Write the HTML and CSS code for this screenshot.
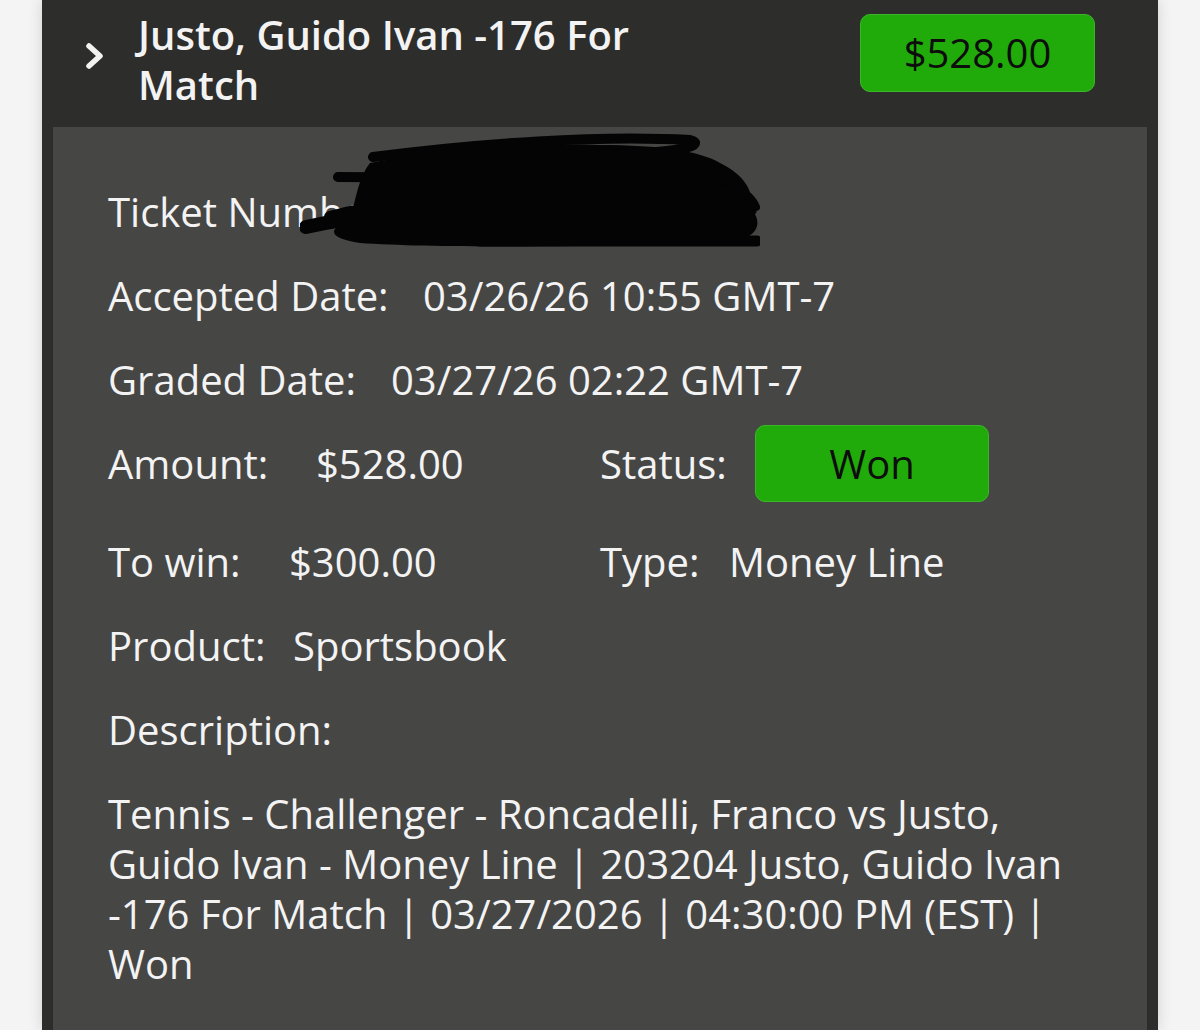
FILE: index.html
```html
<!DOCTYPE html>
<html lang="en">
<head>
<meta charset="utf-8">
<title>Bet ticket</title>
<link rel="stylesheet" href="styles.css">
</head>
<body>
<div class="panel">
  <div class="head">
    <svg class="chev" viewBox="0 0 20 28" width="20" height="28" aria-hidden="true">
      <path d="M4 4 L15 14 L4 24" fill="none" stroke="#f2f2f2" stroke-width="5.5" stroke-linecap="round" stroke-linejoin="round"/>
    </svg>
    <div class="title">Justo, Guido Ivan -176 For Match</div>
    <div class="badge badge-head">$528.00</div>
  </div>
  <div class="body">
    <div class="row row-ticket">
      <span class="k">Ticket Number:</span>
      <svg class="scribble" viewBox="0 0 460 118" width="460" height="118" aria-hidden="true">
        <path d="M70 30 C150 14 230 10 300 12 C360 12 400 18 420 30 C445 42 455 60 450 75 C462 86 460 102 440 106 C350 114 150 116 60 110 C30 106 25 96 50 88 C55 70 58 45 70 30 Z" fill="#040404"/>
        <g fill="none" stroke="#040404" stroke-linecap="round" stroke-linejoin="round">
          <path d="M73 24 C180 10 300 2 390 7 C402 10 400 19 300 22" stroke-width="10"/>
          <path d="M38 44 L420 47" stroke-width="10"/>
          <path d="M6 94 C50 84 100 78 170 78" stroke-width="14"/>
          <path d="M30 84 C80 70 140 66 200 66" stroke-width="12"/>
          <path d="M420 58 C440 60 456 70 452 78" stroke-width="9"/>
          <path d="M180 108 L457 108" stroke-width="11"/>
          <path d="M380 36 C420 42 450 58 456 74" stroke-width="8"/>
          <path d="M60 100 L120 104" stroke-width="10"/>
        </g>
      </svg>
    </div>
    <div class="row">
      <span class="k k-accepted">Accepted Date:</span><span class="v">03/26/26 10:55 GMT-7</span>
    </div>
    <div class="row">
      <span class="k k-graded">Graded Date:</span><span class="v">03/27/26 02:22 GMT-7</span>
    </div>
    <div class="row pair row-tall">
      <div class="cell"><span class="k k-amount">Amount:</span><span class="v">$528.00</span></div>
      <div class="cell"><span class="k k-status">Status:</span><span class="badge badge-status">Won</span></div>
    </div>
    <div class="row pair">
      <div class="cell"><span class="k k-towin">To win:</span><span class="v">$300.00</span></div>
      <div class="cell"><span class="k k-type">Type:</span><span class="v">Money Line</span></div>
    </div>
    <div class="row">
      <span class="k k-product">Product:</span><span class="v">Sportsbook</span>
    </div>
    <div class="row">
      <span class="k">Description:</span>
    </div>
    <p class="desc">Tennis - Challenger - Roncadelli, Franco vs Justo, Guido Ivan - Money Line | 203204 Justo, Guido Ivan -176 For Match | 03/27/2026 | 04:30:00 PM (EST) | Won</p>
  </div>
</div>
</body>
</html>
```
FILE: styles.css
```css
html, body {
  margin: 0;
  padding: 0;
}
body {
  background: #f4f4f4;
  font-family: "Open Sans", "DejaVu Sans", sans-serif;
  color: #f3f3f3;
  height: 1030px;
  overflow: hidden;
}
.panel {
  margin: 0 42px;
  background: #2d2d2c;
  height: 1030px;
  box-shadow: 0 0 14px rgba(0, 0, 0, 0.14);
  display: flex;
  flex-direction: column;
}
.head {
  display: flex;
  align-items: flex-start;
  height: 127px;
  box-sizing: border-box;
  padding: 10px 63px 0 43px;
}
.chev {
  flex: none;
  margin-top: 32px;
  margin-right: 33px;
}
.title {
  flex: 1;
  font-size: 40px;
  line-height: 50px;
  font-weight: 600;
  max-width: 560px;
}
.badge {
  display: inline-block;
  background: #21ab0b;
  border: 1px solid #3cb52a;
  box-sizing: border-box;
  border-radius: 10px;
  color: #0d0d0d;
  text-align: center;
}
.badge-head {
  margin-left: auto;
  margin-top: 4px;
  width: 235px;
  height: 78px;
  line-height: 76px;
  font-size: 40px;
}
.body {
  flex: 1;
  margin: 0 11px;
  background: #464645;
  padding: 60px 55px 0;
}
.row {
  display: flex;
  align-items: flex-start;
  font-size: 40px;
  line-height: 50px;
  margin-bottom: 34px;
  white-space: nowrap;
}
.row-ticket {
  position: relative;
}
.scribble {
  position: absolute;
  left: 192px;
  top: -54px;
}
.pair {
  display: grid;
  grid-template-columns: 492px 1fr;
}
.row-tall {
  min-height: 64px;
}
.cell {
  display: flex;
  align-items: flex-start;
}
.k {
  flex: none;
}
.k-accepted { width: 315px; }
.k-graded { width: 283px; }
.k-amount { width: 208px; }
.k-towin { width: 181px; }
.k-product { width: 185px; }
.k-status { width: 155px; }
.k-type { width: 129px; }
.badge-status {
  width: 234px;
  height: 77px;
  line-height: 75px;
  margin-top: -14px;
  font-size: 40px;
}
.desc {
  margin: 0;
  font-size: 40px;
  line-height: 50px;
}
```
